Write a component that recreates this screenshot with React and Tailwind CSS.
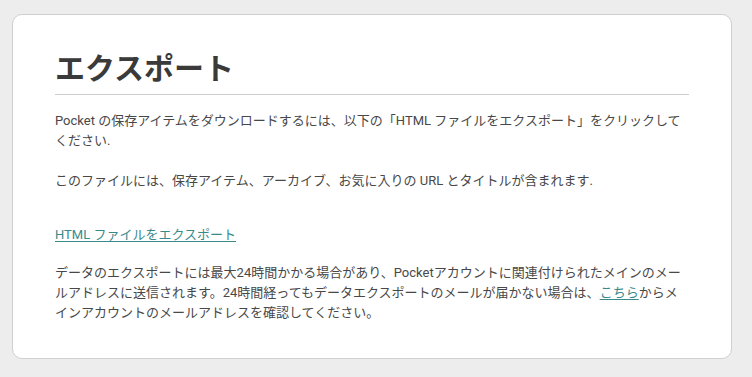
export default function App() {
  return (
    <div
      className="min-h-screen bg-[#ededed] pt-[14px] pl-[12px]"
      style={{ fontFamily: 'Roboto, "Noto Sans CJK JP", sans-serif' }}
    >
      <div className="w-[720px] h-[345px] bg-white border border-[#cfcfcf] rounded-[10px] px-[42px] pt-[35px]">
        {/* Title */}
        <h1 className="text-[30px] leading-[38px] font-bold text-[#3a3a3a] pb-[6px] border-b border-[#cccccc]">
          エクスポート
        </h1>

        <div className="text-[13px] leading-[20px] text-[#484848]">
          <p className="mt-[16px]">
            Pocket の保存アイテムをダウンロードするには、以下の「HTML ファイルをエクスポート」をクリックしてください.
          </p>
          <p className="mt-[20px]">
            このファイルには、保存アイテム、アーカイブ、お気に入りの URL とタイトルが含まれます.
          </p>
          <p className="mt-[34px]">
            <a href="#" className="text-[#3a8a8c] underline underline-offset-2">
              HTML ファイルをエクスポート
            </a>
          </p>
          <p className="mt-[18px]">
            データのエクスポートには最大24時間かかる場合があり、Pocketアカウントに関連付けられたメインのメールアドレスに送信されます。24時間経ってもデータエクスポートのメールが届かない場合は、
            <a href="#" className="text-[#3a8a8c] underline underline-offset-2">
              こちら
            </a>
            からメインアカウントのメールアドレスを確認してください。
          </p>
        </div>
      </div>
    </div>
  );
}
